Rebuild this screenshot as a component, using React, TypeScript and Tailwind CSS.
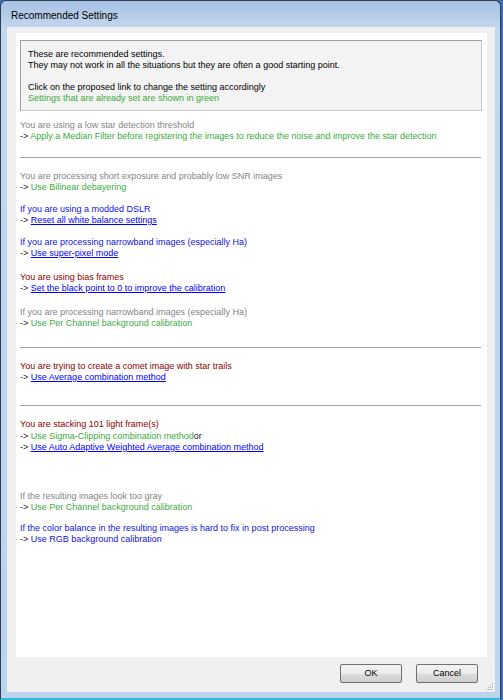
import React from "react";

const GRAY = "text-[#858585]";
const GREEN = "text-[#3cab3c]";
const BLUE = "text-[#1212e0]";
const RED = "text-[#8b0000]";
const DARK = "text-[#1a1a1a]";

function Arrow() {
  return <span className={DARK}>-&gt; </span>;
}

function Link({ children }: { children: React.ReactNode }) {
  return <span className="text-[#0000ff] underline underline-offset-[1px]">{children}</span>;
}

function Hr({ className }: { className: string }) {
  return <div className={"h-px bg-[#a0a0a0] mr-[1px] " + className} />;
}

export default function App() {
  return (
    <div className="w-[503px] h-[700px] bg-[#3d6db0] flex overflow-hidden font-['Liberation_Sans',Arial,sans-serif]">
      <div className="w-[501px] h-[700px] flex flex-col border-x border-t border-[#2f3d50] border-b-2 border-b-[#34b9da] rounded-t-[6px] bg-[linear-gradient(180deg,#a4c1e4_0px,#c3d7ee_26px,#bcd3ec_100%)] pl-[6px] pr-[5px] pb-[6px]">
        <div className="h-[26px] flex items-center pl-[4px] pt-[2px] text-[10px] text-black">
          Recommended Settings
        </div>
        <div className="relative flex-1 flex flex-col bg-[#f0f0f0] pl-[9px] pr-[8px] pt-[6px]">
          <div className="flex-1 bg-white pl-[4px] pr-[5px] pt-[7px] text-[9px] leading-[11px] flex flex-col">
            <div className="border border-[#a0a0a0] border-r-[#c8c8c8] border-b-[#c8c8c8] bg-[#f3f3f3] pl-[7px] pt-[8px] pb-[6px] text-black">
              <div>These are recommended settings.</div>
              <div>They may not work in all the situations but they are often a good starting point.</div>
              <div>&nbsp;</div>
              <div>Click on the proposed link to change the setting accordingly</div>
              <div className={GREEN}>Settings that are already set are shown in green</div>
            </div>

            <div className="mt-[9px]">
              <div className={GRAY}>You are using a low star detection threshold</div>
              <div>
                <Arrow />
                <span className={GREEN}>
                  Apply a Median Filter before registering the images to reduce the noise and improve the star detection
                </span>
              </div>
            </div>

            <Hr className="mt-[15px]" />

            <div className="mt-[13px]">
              <div className={GRAY}>You are processing short exposure and probably low SNR images</div>
              <div>
                <Arrow />
                <span className={GREEN}>Use Bilinear debayering</span>
              </div>
            </div>

            <div className="mt-[11px]">
              <div className={BLUE}>If you are using a modded DSLR</div>
              <div>
                <Arrow />
                <Link>Reset all white balance settings</Link>
              </div>
            </div>

            <div className="mt-[11px]">
              <div className={BLUE}>If you are processing narrowband images (especially Ha)</div>
              <div>
                <Arrow />
                <Link>Use super-pixel mode</Link>
              </div>
            </div>

            <div className="mt-[13px]">
              <div className={RED}>You are using bias frames</div>
              <div>
                <Arrow />
                <Link>Set the black point to 0 to improve the calibration</Link>
              </div>
            </div>

            <div className="mt-[13px]">
              <div className={GRAY}>If you are processing narrowband images (especially Ha)</div>
              <div>
                <Arrow />
                <span className={GREEN}>Use Per Channel background calibration</span>
              </div>
            </div>

            <Hr className="mt-[18px]" />

            <div className="mt-[13px]">
              <div className={RED}>You are trying to create a comet image with star trails</div>
              <div>
                <Arrow />
                <Link>Use Average combination method</Link>
              </div>
            </div>

            <Hr className="mt-[22px]" />

            <div className="mt-[13px]">
              <div className={RED}>You are stacking 101 light frame(s)</div>
              <div className="mt-[1px]">
                <Arrow />
                <span className={GREEN}>Use Sigma-Clipping combination method</span>
                <span className={DARK}>or</span>
              </div>
              <div>
                <Arrow />
                <Link>Use Auto Adaptive Weighted Average combination method</Link>
              </div>
            </div>

            <div className="mt-[38px]">
              <div className={GRAY}>If the resulting images look too gray</div>
              <div>
                <Arrow />
                <span className={GREEN}>Use Per Channel background calibration</span>
              </div>
            </div>

            <div className="mt-[10px]">
              <div className={BLUE}>If the color balance in the resulting images is hard to fix in post processing</div>
              <div>
                <Arrow />
                <span className={BLUE}>Use RGB background calibration</span>
              </div>
            </div>
          </div>

          <div className="h-[35px] flex justify-end items-start pt-[7px] pr-[9px] gap-[14px]">
            <button className="w-[62px] h-[19px] border border-[#707070] rounded-[2px] bg-[linear-gradient(180deg,#f2f2f2_0%,#ebebeb_50%,#dddddd_51%,#cfcfcf_100%)] text-[9px] text-black flex items-center justify-center">
              OK
            </button>
            <button className="w-[62px] h-[19px] border border-[#707070] rounded-[2px] bg-[linear-gradient(180deg,#f2f2f2_0%,#ebebeb_50%,#dddddd_51%,#cfcfcf_100%)] text-[9px] text-black flex items-center justify-center">
              Cancel
            </button>
          </div>

          <svg className="absolute right-[1px] bottom-[1px]" width="10" height="10" viewBox="0 0 10 10">
            <g fill="#a9a9a9">
              <rect x="8" y="2" width="1" height="1" />
              <rect x="6" y="4" width="1" height="1" />
              <rect x="8" y="4" width="1" height="1" />
              <rect x="4" y="6" width="1" height="1" />
              <rect x="6" y="6" width="1" height="1" />
              <rect x="8" y="6" width="1" height="1" />
              <rect x="2" y="8" width="1" height="1" />
              <rect x="4" y="8" width="1" height="1" />
              <rect x="6" y="8" width="1" height="1" />
              <rect x="8" y="8" width="1" height="1" />
            </g>
          </svg>
        </div>
      </div>
    </div>
  );
}
